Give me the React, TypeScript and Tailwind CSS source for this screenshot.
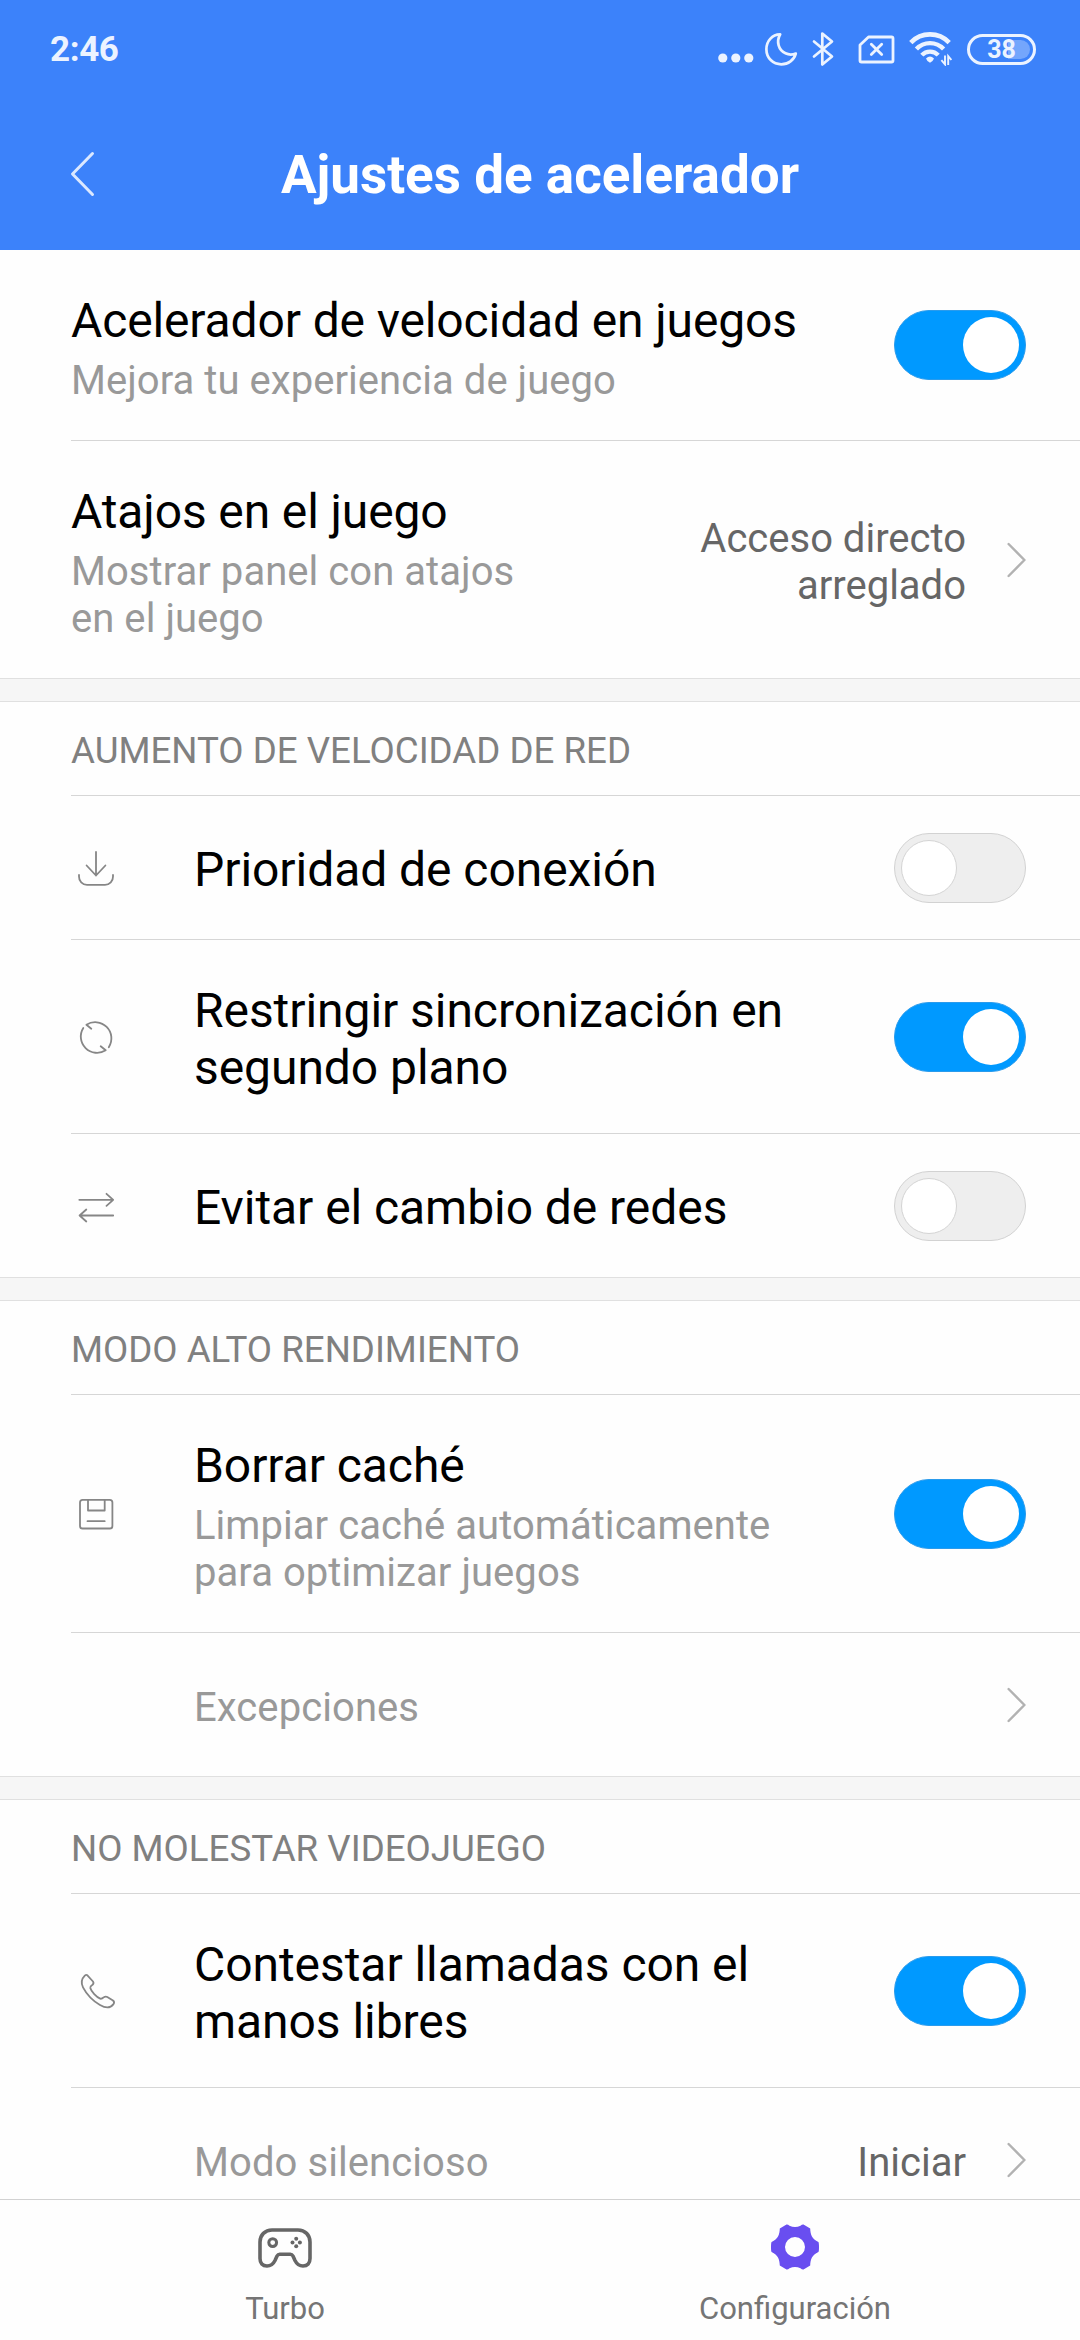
import { useState, type ReactNode } from 'react';
import clsx from 'clsx';

function MoonIcon() {
  return (
    <svg width="34" height="35" viewBox="0 0 34 35" fill="none" stroke="currentColor" strokeWidth="2.7" strokeLinejoin="round">
      <path d="M16.2 2.4C8 2.6 2.4 9 2.4 17.2C2.4 26 9 32.3 17.3 32.3C24.3 32.3 30 28 31.8 21.6C28.5 22.9 24.8 23 21.5 21.3C14.5 18.2 12 9.5 16.2 2.4Z" />
    </svg>
  );
}

function BluetoothIcon() {
  return (
    <svg width="22" height="36" viewBox="0 0 22 36" fill="none" stroke="currentColor" strokeWidth="2.7" strokeLinejoin="round" strokeLinecap="round">
      <path d="M2 10.5L20 25.5L10.3 33.5V2.5L20 10.5L2 25.5" />
    </svg>
  );
}

function NoSimIcon() {
  return (
    <svg width="37" height="29" viewBox="0 0 37 29" fill="none" stroke="currentColor" strokeWidth="2.8" strokeLinejoin="round" strokeLinecap="round">
      <path d="M10.5 2H33.5Q35 2 35 3.5V25.5Q35 27 33.5 27H3.5Q2 27 2 25.5V10Z" />
      <path d="M13.3 9.2L23.7 19.6M23.7 9.2L13.3 19.6" />
    </svg>
  );
}

function WifiIcon() {
  return (
    <svg width="43" height="34" viewBox="0 0 43 34" fill="none" stroke="currentColor">
      <path d="M1.8 10.6A26.6 26.6 0 0 1 40.2 10.6" strokeWidth="4.6" />
      <path d="M7.4 17A18.6 18.6 0 0 1 34.6 17" strokeWidth="4.4" />
      <path d="M12.8 23.2A11 11 0 0 1 29.2 23.2" strokeWidth="4.2" />
      <path d="M17 26.4Q21 22.6 25 26.4Q24.3 28.8 21 30.8Q17.7 28.8 17 26.4Z" fill="currentColor" stroke="none" />
      <path d="M36 23.6V32.4L32.4 28.2M39.2 33V24.2L42.4 28" strokeWidth="1.9" />
    </svg>
  );
}

function StatusBar() {
  return (
    <div className="flex h-[98px] items-center justify-between pr-[44px] pl-[50px] text-[#ecf3ff]">
      <span className="pt-[2px] text-[35px] leading-[42px] font-bold tracking-[-0.4px]">2:46</span>
      <div className="flex items-center">
        <svg className="mt-[18px]" width="36" height="10" viewBox="0 0 36 10" fill="currentColor">
          <circle cx="4.8" cy="5" r="4.6" />
          <circle cx="17.8" cy="5" r="4.6" />
          <circle cx="30.8" cy="5" r="4.6" />
        </svg>
        <div className="ml-[10px] flex items-center">
          <MoonIcon />
        </div>
        <div className="ml-[14px] flex items-center">
          <BluetoothIcon />
        </div>
        <div className="ml-[24px] flex items-center">
          <NoSimIcon />
        </div>
        <div className="ml-[14px] flex items-center">
          <WifiIcon />
        </div>
        <div className="ml-[15px] flex h-[31px] w-[69px] rounded-full border-3 border-[#ecf3ff] p-[3px]">
          <div className="flex w-full items-center justify-center rounded-full bg-linear-to-l from-[#74a6fc] from-38% to-transparent to-38%">
            <span className="text-[25px] leading-[29px] font-bold">38</span>
          </div>
        </div>
      </div>
    </div>
  );
}

function Chevron() {
  return (
    <svg className="shrink-0" width="19" height="36" viewBox="0 0 19 36" fill="none" stroke="#b2b2b2" strokeWidth="2.4" strokeLinecap="round">
      <path d="M1.6 2L17.4 18L1.6 34" />
    </svg>
  );
}

function Toggle({ initial = false }: { initial?: boolean }) {
  const [on, setOn] = useState(initial);

  return (
    <button
      role="switch"
      aria-checked={on}
      onClick={() => setOn(!on)}
      className={clsx(
        'flex h-[70px] w-[132px] shrink-0 items-center rounded-full border px-[6px]',
        on ? 'justify-end border-[#2a9bec] bg-[#0099ff]' : 'justify-start border-[#d2d2d2] bg-[#eeeeee]'
      )}
    >
      <span className={clsx('size-[56px] rounded-full bg-white', !on && 'border border-[#d4d4d4]')} />
    </button>
  );
}

function RowIcon({ children }: { children: ReactNode }) {
  return (
    <svg width="48" height="48" viewBox="0 0 48 48" fill="none" stroke="#868686" strokeWidth="1.8" strokeLinejoin="round" strokeLinecap="round">
      {children}
    </svg>
  );
}

const icons = {
  download: (
    <RowIcon>
      <path d="M24 8V31.5M14.6 21.5L24 31.5L33.4 21.5" />
      <path d="M7 31V32.5A8 8 0 0 0 15 40.8H33A8 8 0 0 0 41 32.5V31" />
    </RowIcon>
  ),
  sync: (
    <RowIcon>
      <path d="M19.3 15.8L14.4 11.8A16.2 16.2 0 0 1 36.8 34.2" />
      <path d="M28.7 33.3L33.7 37.3A16.2 16.2 0 0 1 11.3 15" />
    </RowIcon>
  ),
  swap: (
    <RowIcon>
      <path d="M7.3 17.8H41.2M34.5 11.8L41.2 17.8L34.5 23.8" />
      <path d="M41.2 33.5H7.6M14.3 27.5L7.6 33.5L14.3 39.5" />
    </RowIcon>
  ),
  save: (
    <RowIcon>
      <rect x="8" y="9.9" width="32.4" height="28.6" rx="2.6" />
      <path d="M16 10.1V20.5H32.7V10.1M15.5 31.2H32.7" />
    </RowIcon>
  ),
  phone: (
    <RowIcon>
      <path d="M15.4 8.3L21 14.5Q22.2 16.2 20.5 17.8Q18 19.4 18.3 21C19.3 24.7 24.5 30.3 28.2 31.7Q30 32 31.6 30.4Q33.5 29 35.3 30L41 33.5Q43 35 41.3 37.4C38.5 41 33.5 41.2 28 38C21 33.8 14.5 27 11 20.3C8.6 15.5 9.5 12 12.8 8.7Q14.2 7.4 15.4 8.3Z" />
    </RowIcon>
  ),
};

interface RowProps {
  title?: string;
  subtitle?: string;
  muted?: string;
  value?: string;
  icon?: ReactNode;
  indent?: boolean;
  height: string;
  control: ReactNode;
}

function Row({ title, subtitle, muted, value, icon, indent, height, control }: RowProps) {
  return (
    <div className={clsx('flex shrink-0 items-center pr-[54px] pl-[71px]', height)}>
      {indent && <div className="w-[123px] shrink-0 pl-px">{icon}</div>}
      <div className={clsx('flex-1 whitespace-pre-line', subtitle || muted ? 'pt-[6px]' : 'pt-[4px]')}>
        {title && (
          <p className={clsx('text-[48px] leading-[57px] text-black', indent ? 'tracking-[-0.06px]' : 'tracking-[-0.13px]')}>
            {title}
          </p>
        )}
        {subtitle && <p className="mt-2 text-[40px] leading-[47px] tracking-[0.05px] text-[#999999]">{subtitle}</p>}
        {muted && <p className="text-[40px] leading-[47px] tracking-[0.08px] text-[#999999]">{muted}</p>}
      </div>
      {value && (
        <p className="mr-[41px] pt-[5px] text-right text-[40px] leading-[47px] whitespace-pre-line text-[#666666]">{value}</p>
      )}
      {control}
    </div>
  );
}

function Divider() {
  return <div className="ml-[71px] h-px shrink-0 bg-[#d6d6d6]" />;
}

function Gap() {
  return <div className="h-6 shrink-0 border-y border-[#e0e0e0] bg-[#f6f6f6]" />;
}

function SectionTitle({ children }: { children: string }) {
  return (
    <h2 className="flex h-[93px] shrink-0 items-center pt-[5px] pl-[71px] text-[36.7px] leading-[42px] text-[#808080]">{children}</h2>
  );
}

function BottomNav() {
  return (
    <nav className="grid h-[141px] shrink-0 grid-cols-2 border-t border-[#d2d2d2] px-[30px] text-[31px] leading-[35px] text-[#757575]">
      <div className="flex flex-col items-center pt-[28px]">
        <svg width="54" height="40" viewBox="0 0 54 40" fill="none" stroke="#666666" strokeWidth="3.6">
          <path d="M14 2H40C47 2 52 7 52 14V30.5C52 35 49.5 38 45 38C40.5 38 38.5 35.5 37 32.5L35 28Q34 26.2 32.3 26.2H21.7Q20 26.2 19 28L17 32.5C15.5 35.5 13.5 38 9 38C4.5 38 2 35 2 30.5V14C2 7 7 2 14 2Z" />
          <circle cx="14.7" cy="14.6" r="3.9" strokeWidth="3" />
          <g fill="#666666" stroke="none">
            <circle cx="38.2" cy="10.8" r="2" />
            <circle cx="38.2" cy="18.2" r="2" />
            <circle cx="34.5" cy="14.5" r="2" />
            <circle cx="41.9" cy="14.5" r="2" />
          </g>
        </svg>
        <span className="mt-[23px]">Turbo</span>
      </div>
      <div className="flex flex-col items-center pt-[24px]">
        <svg width="48" height="46" viewBox="0 0 48 46">
          <path
            fill="#694ef0"
            fillRule="evenodd"
            d="M15.5 .4Q17 .2 18.5 1.7Q24 4.4 29.5 1.7Q31 .2 32.5 .4L39.2 4.4C39.4 10.5 41 15 47.4 17.9Q48 18.6 48 23Q48 27.4 47.4 28.1C41 31 39.4 35.5 39.2 41.6L32.5 45.6Q31 45.8 29.5 44.3Q24 41.6 18.5 44.3Q17 45.8 15.5 45.6L8.8 41.6C8.6 35.5 7 31 .6 28.1Q0 27.4 0 23Q0 18.6 .6 17.9C7 15 8.6 10.5 8.8 4.4ZM24 13A10 10 0 1 0 24 33A10 10 0 1 0 24 13Z"
          />
        </svg>
        <span className="mt-[21px]">Configuración</span>
      </div>
    </nav>
  );
}

export default function App() {
  return (
    <div className="flex h-[2340px] w-[1080px] flex-col overflow-hidden bg-[#fefefe] font-['Roboto',sans-serif]">
      <header className="h-[250px] shrink-0 bg-[#3c82fa]">
        <StatusBar />
        <div className="grid h-[152px] grid-cols-[200px_1fr_200px] items-center">
          <svg className="ml-[70px]" width="25" height="46" viewBox="0 0 25 46" fill="none" stroke="#dbe8ff" strokeWidth="3" strokeLinecap="round" strokeLinejoin="round">
            <path d="M22.5 2.5L2.5 23L22.5 43.5" />
          </svg>
          <h1 className="pt-[2px] text-center text-[53px] leading-[63px] font-bold text-white">Ajustes de acelerador</h1>
        </div>
      </header>

      <main className="flex min-h-0 flex-1 flex-col overflow-hidden">
        <Row
          height="h-[190px]"
          title="Acelerador de velocidad en juegos"
          subtitle="Mejora tu experiencia de juego"
          control={<Toggle initial />}
        />
        <Divider />
        <Row
          height="h-[237px]"
          title="Atajos en el juego"
          subtitle={'Mostrar panel con atajos\nen el juego'}
          value={'Acceso directo\narreglado'}
          control={<Chevron />}
        />
        <Gap />

        <SectionTitle>AUMENTO DE VELOCIDAD DE RED</SectionTitle>
        <Divider />
        <Row height="h-[143px]" indent icon={icons.download} title="Prioridad de conexión" control={<Toggle />} />
        <Divider />
        <Row
          height="h-[193px]"
          indent
          icon={icons.sync}
          title={'Restringir sincronización en\nsegundo plano'}
          control={<Toggle initial />}
        />
        <Divider />
        <Row height="h-[143px]" indent icon={icons.swap} title="Evitar el cambio de redes" control={<Toggle />} />
        <Gap />

        <SectionTitle>MODO ALTO RENDIMIENTO</SectionTitle>
        <Divider />
        <Row
          height="h-[237px]"
          indent
          icon={icons.save}
          title="Borrar caché"
          subtitle={'Limpiar caché automáticamente\npara optimizar juegos'}
          control={<Toggle initial />}
        />
        <Divider />
        <Row height="h-[143px]" indent muted="Excepciones" control={<Chevron />} />
        <Gap />

        <SectionTitle>NO MOLESTAR VIDEOJUEGO</SectionTitle>
        <Divider />
        <Row
          height="h-[193px]"
          indent
          icon={icons.phone}
          title={'Contestar llamadas con el\nmanos libres'}
          control={<Toggle initial />}
        />
        <Divider />
        <Row height="h-[143px]" indent muted="Modo silencioso" value="Iniciar" control={<Chevron />} />
      </main>

      <BottomNav />
    </div>
  );
}
